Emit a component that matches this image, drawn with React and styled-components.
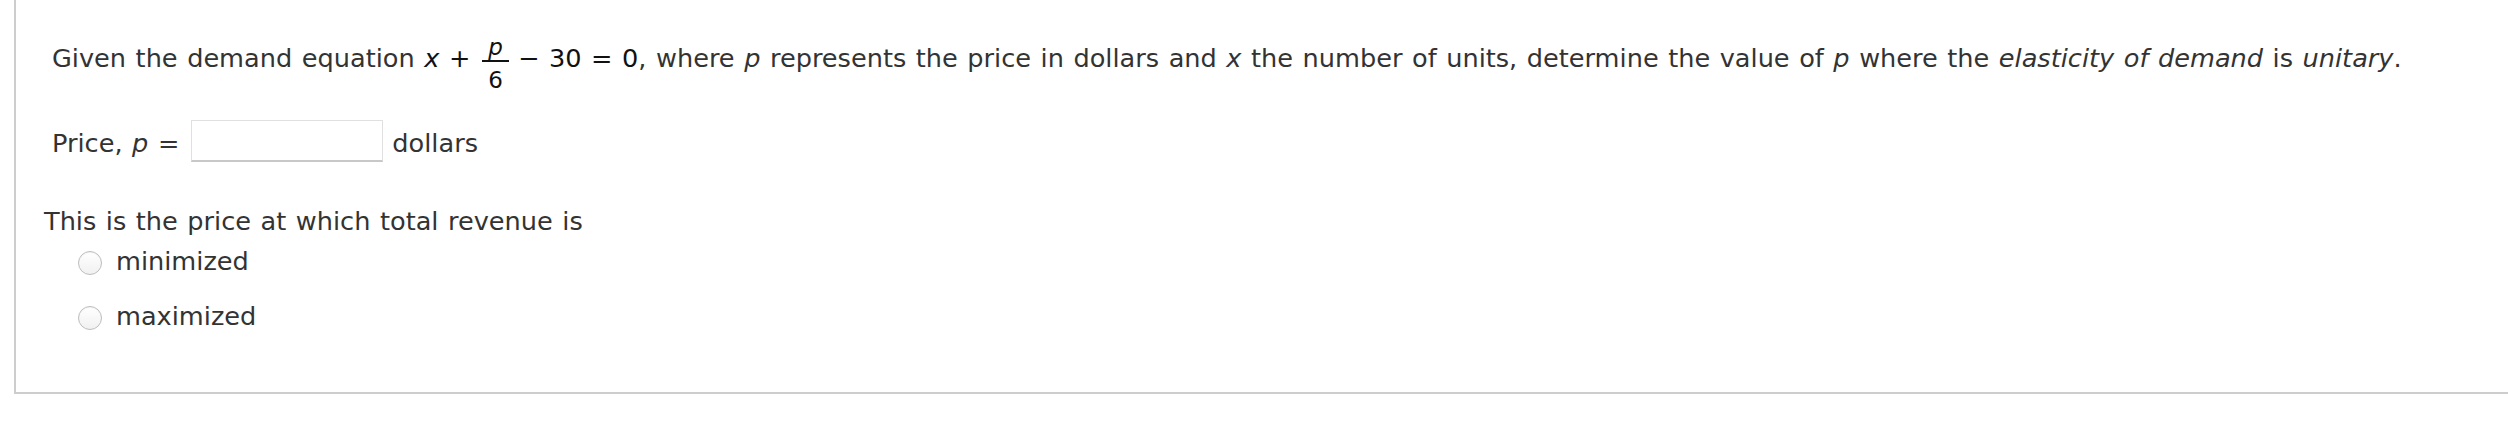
import React from 'react'
import styled, { createGlobalStyle } from 'styled-components'

const GlobalStyle = createGlobalStyle`
    body {
        margin: 0;
        background: #fff;
        font-family: "DejaVu Sans", Verdana, sans-serif;
        color: #333;
    }
`

const Panel = styled.div`
    box-sizing: border-box;
    margin-left: 14px;
    height: 394px;
    padding-top: 38px;
    border-left: 2px solid #cdcdcd;
    border-bottom: 2px solid #cdcdcd;
    font-size: 25.6px;
    word-spacing: 1.4px;
`
const Question = styled.p`
    margin: 0;
    padding-left: 36px;
    line-height: 40px;
    white-space: nowrap;
`
const Math = styled.span`
    color: #111;
`
const Var = styled.i`
    font-style: italic;
`
// numerator sits on the math axis, the whole thing kept out of the line box height
const Frac = styled.span`
    display: inline-flex;
    flex-direction: column;
    align-items: center;
    vertical-align: 12px;
    margin: -6px 9px -14px 12px;
    font-size: 23px;
    line-height: 1;
`
const Num = styled.span`
    padding: 0 6px 1px;
    border-bottom: 2px solid #111;
`
const Den = styled.span`
    padding-top: 7px;
`
const PriceRow = styled.div`
    display: flex;
    align-items: center;
    margin-top: 42px;
    padding-left: 36px;
    height: 42px;
`
const Label = styled.span`
    line-height: 40px;
    padding-top: 4px;
    white-space: nowrap;
`
const AnswerBox = styled.input`
    box-sizing: border-box;
    width: 192px;
    height: 42px;
    margin: 0 9px 0 12px;
    border: 1px solid #e0e0e0;
    border-bottom: 2px solid #c8c8c8;
    background: #fff;
    font: inherit;
`
const Prompt = styled.p`
    margin: 39px 0 0;
    padding-left: 28px;
    line-height: 40px;
`
const Options = styled.div`
    display: flex;
    flex-direction: column;
    gap: 15px;
    padding-left: 62px;
`
const Option = styled.label`
    display: flex;
    align-items: center;
    gap: 14px;
    height: 40px;
    line-height: 40px;
`
const Radio = styled.span`
    box-sizing: border-box;
    width: 24px;
    height: 24px;
    margin-top: 3px;
    border-radius: 50%;
    border: 1px solid #bdbdbd;
    background: linear-gradient(#fff, #f1f1f1);
    box-shadow: inset 0 1px 1px rgba(0, 0, 0, 0.05);
`

function App() {
    const options = ['minimized', 'maximized']
    return (
        <>
            <GlobalStyle />
            <Panel>
                <Question>
                    Given the demand equation{' '}
                    <Math>
                        <Var>x</Var> +
                        <Frac>
                            <Num><Var>p</Var></Num>
                            <Den>6</Den>
                        </Frac>
                        − 30 = 0
                    </Math>
                    , where <Var>p</Var> represents the price in dollars and <Var>x</Var> the number of units,
                    determine the value of <Var>p</Var> where the <Var>elasticity of demand</Var> is <Var>unitary</Var>.
                </Question>
                <PriceRow>
                    <Label>Price, <Var>p</Var> =</Label>
                    <AnswerBox type="text" />
                    <Label>dollars</Label>
                </PriceRow>
                <Prompt>This is the price at which total revenue is</Prompt>
                <Options>
                    {options.map((option) => (
                        <Option key={option}>
                            <Radio />
                            {option}
                        </Option>
                    ))}
                </Options>
            </Panel>
        </>
    )
}

export default App
